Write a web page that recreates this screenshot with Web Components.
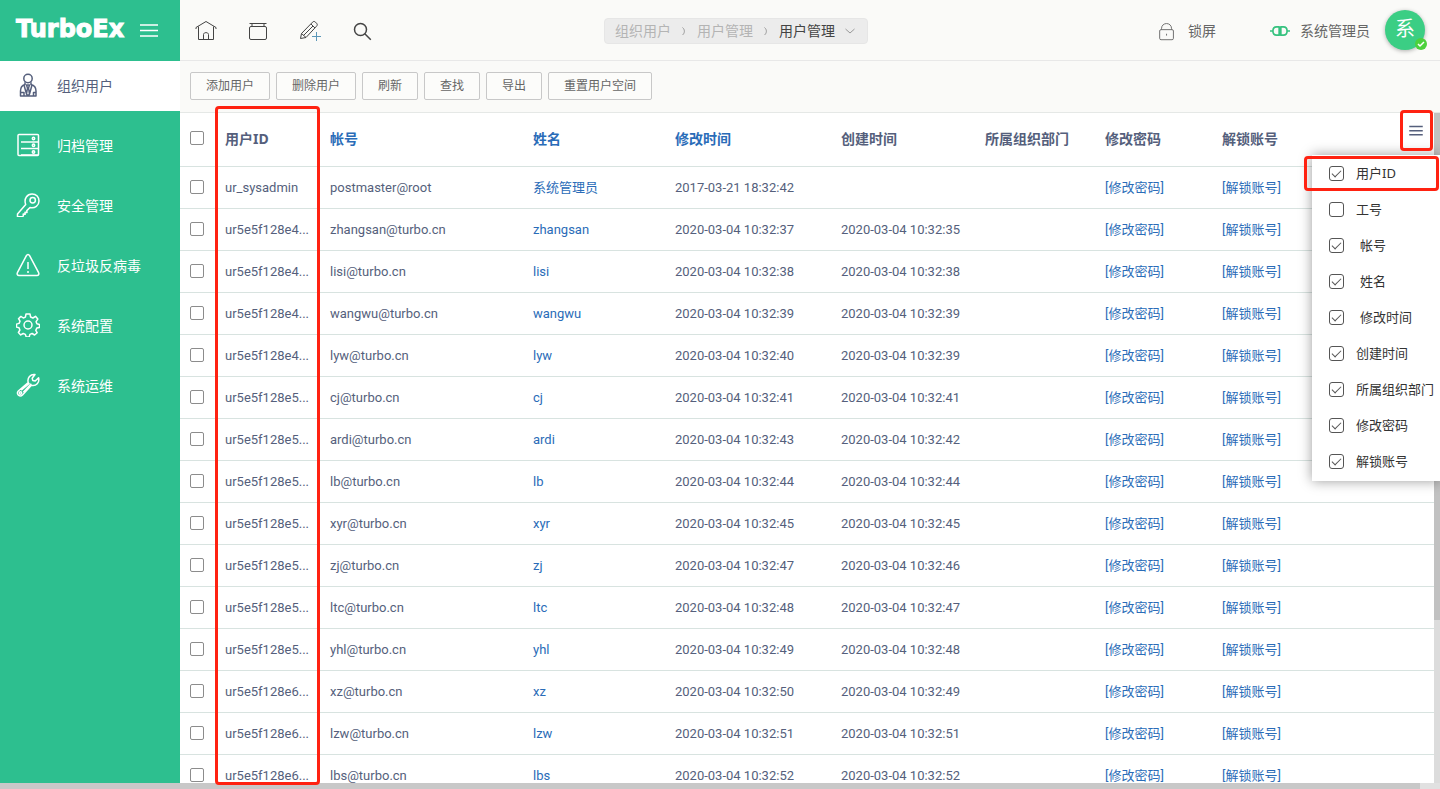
<!DOCTYPE html>
<html lang="zh-CN">
<head>
<meta charset="utf-8">
<meta name="viewport" content="width=device-width, initial-scale=1">
<title>TurboEx 用户管理</title>
<style>
body {
    margin: 0;
    font-family: "Noto Sans", "Noto Sans CJK SC", sans-serif;
    font-size: 13px;
    color: #555f7c;
}
</style>
</head>
<body>
<admin-app>
    <side-bar slot="side">
        <nav-item icon="user" active>组织用户</nav-item>
        <nav-item icon="archive">归档管理</nav-item>
        <nav-item icon="key">安全管理</nav-item>
        <nav-item icon="warn">反垃圾反病毒</nav-item>
        <nav-item icon="gear">系统配置</nav-item>
        <nav-item icon="wrench">系统运维</nav-item>
    </side-bar>
    <top-bar slot="top">
        <bread-crumb slot="crumb"></bread-crumb>
    </top-bar>
    <tool-bar slot="tools">
        <tool-button>添加用户</tool-button>
        <tool-button>删除用户</tool-button>
        <tool-button>刷新</tool-button>
        <tool-button>查找</tool-button>
        <tool-button>导出</tool-button>
        <tool-button>重置用户空间</tool-button>
    </tool-bar>
    <user-table slot="content"></user-table>
</admin-app>

<script>
const icons = {
    user: '<circle cx="12" cy="5.5" r="4.2"/><path d="M9 9.2v2.300C5.500 12.500 4.500 15 4.500 18v5h15.500v-5c0-3-1-5.500-5-6.500V9.200M4.500 19.500H8V23M17.500 23v-3.500H20M10.500 12h3l-1 3 1 6-1.500 2-1.500-2 1-6zM8 12l2.500 9M16 12l-2.500 9"/>',
    archive: '<rect x="2" y="1.500" width="20.500" height="21" rx="1"/><path d="M5 9h17M5 15.500h17M5 22h17"/><circle cx="17.500" cy="5.500" r="1.200"/><circle cx="17.500" cy="12.200" r="1.200"/><circle cx="17.500" cy="19" r="1.200"/>',
    key: '<path d="M9.700 11.500C7.500 5.500 11.500 1 16 1c4.500 0 7 3.300 7 7 0 4.500-4 7.500-9 6.500l-3.200 3.100.2 1.900-2-.2.2 2-2-.2.2 1.700-1.200 1H1.500v-2.800z"/><circle cx="16.700" cy="7.200" r="2.700"/>',
    warn: '<path d="M10.400 2.700c.7-1.500 2.500-1.500 3.200 0l9 17c.7 1.500 0 2.800-1.600 2.800H3c-1.600 0-2.300-1.300-1.600-2.800zM12 9v7M12 18v2"/>',
    gear: '<circle cx="12" cy="12" r="4"/><path d="M10 1h4l.6 3 2.300 1 2.600-1.700 2.300 2.800-1.700 2.600.8 2.100 2.600.7v2.900l-2.700.7-1 2.200 1.400 2.500-2.600 2.200-2.500-1.500-2.200.9-.7 2.500h-3l-.8-2.500-2.200-.9-2.500 1.400-2.300-2.400 1.500-2.500-.9-2.200-2.500-.7v-3l2.600-.7.9-2.200-1.500-2.500 2.400-2.300L7.300 5l2.100-.9z"/>',
    wrench: '<path d="M2.300 18L12.200 9.500C11 5 14.500.8 19 1.500l-2.800 3.800.6 2.300 2.400.4L22.600 4.700c1.200 5-2.400 8.600-7.200 7.600L6.500 22c-2.500 2.500-7-1-4.200-4zM5.200 17.300l8.300-7.200M7.300 19.300l8-8.500"/><circle cx="4.500" cy="20" r="1.200"/>',
    menu: '<path d="M3 6h18M3 11.500h18M3 17h18"/>',
    home: '<path d="M2 8.500l10-6 10 6M2 8.500v1.500M22 8.500v1.500M4.500 7.500v13h15v-13M9.500 20.500V15.500c0-2.500 5-2.500 5 0v5"/>',
    box: '<rect x="3.500" y="7.500" width="17" height="13" rx="1.500"/><path d="M3.500 4.500h17M6 5v2.500M18 5v2.500"/>',
    edit: '<path d="M2.500 19.500l1-5L14.500 3.200c1-1 2-1 3 0l1 1c1 1 1 2 0 3L8 18.500zM3.500 14.500L8 18.500M13 5l4 4M5.500 16.500L15 7"/>',
    plus: '<path d="M18.500 13v9M14 17.500h9"/>',
    search: '<circle cx="10.500" cy="10.500" r="6"/><path d="M14.800 14.800L20.800 20.800"/>',
    lock: '<rect x="4" y="10.500" width="15" height="11" rx="1.500"/><path d="M6 10.500V9.500c0-7.500 11-7.500 11 0v1M11.500 15v2"/>',
    link: '<path d="M11 7H8c-6 0-6 10 0 10h3zM13 7h3c6 0 6 10 0 10h-3zM0 12h3.500M20.500 12H24"/>',
    right: '<path d="M9 5c5 4 5 11 0 15"/>',
    down: '<path d="M3 8l9 8 9-8"/>',
    check: '<path d="M6 12l4 4 8-8"/>'
};

function icon(name, size, stroke = 1) {
    return `<svg width="${size}" height="${size}" viewBox="0 0 24 24" fill="none" stroke="currentColor" stroke-width="${stroke}" stroke-linejoin="round" aria-hidden="true">${icons[name]}</svg>`;
}

class BaseElement extends HTMLElement {
    constructor() {
        super();
        this.attachShadow({ mode: 'open' });
    }
    connectedCallback() {
        this.shadowRoot.innerHTML = this.render();
    }
}

class AdminApp extends BaseElement {
    render() {
        return `
        <style>
        :host {
            display: grid;
            grid-template-columns: 180px minmax(0, 1fr);
            grid-template-rows: minmax(0, 1fr) 6px;
            height: 100vh;
            overflow: hidden;
            background: #fff;
        }
        .main {display: flex; flex-direction: column; min-height: 0}
        .content {flex: 1; min-height: 0; display: flex}
        scroll-bar {grid-column: 1 / -1}
        </style>
        <slot name="side"></slot>
        <div class="main">
            <slot name="top"></slot>
            <slot name="tools"></slot>
            <div class="content"><slot name="content"></slot></div>
        </div>
        <scroll-bar style="--thumb: 1420fr; --rest: 20fr"></scroll-bar>
        `;
    }
}

class ScrollBar extends BaseElement {
    render() {
        return `
        <style>
        :host {display: grid; grid-template-columns: var(--thumb) var(--rest); background: #e1e1e1}
        :host([vertical]) {grid-template-columns: none; grid-template-rows: var(--thumb) var(--rest); width: 6px; background: #dcdcdc}
        div {background: #c8c8c8}
        :host([vertical]) div {background: #c1c1c1}
        </style>
        <div></div>
        `;
    }
}

class SideBar extends BaseElement {
    render() {
        return `
        <style>
        :host {display: block; background: #2dbf8f; color: #fff}
        header {display: flex; align-items: center; gap: 13px; height: 61px; padding: 0 0 3px 16px; box-sizing: border-box}
        b {font: bold 24px/32px "DejaVu Sans", sans-serif; -webkit-text-stroke: 1px #fff}
        button {display: flex; padding: 3px 0 0; border: 0; background: none; color: inherit}
        nav {display: flex; flex-direction: column; gap: 10px}
        </style>
        <header>
            <b>TurboEx</b>
            <button type="button" aria-label="菜单">${icon('menu', 24, 1.5)}</button>
        </header>
        <nav><slot></slot></nav>
        `;
    }
}

class NavItem extends BaseElement {
    render() {
        return `
        <style>
        :host {display: block}
        a {
            display: flex;
            align-items: center;
            gap: 17px;
            height: 50px;
            padding-left: 16px;
            color: #fff;
            font-size: 14px;
            line-height: 20px;
            text-decoration: none;
        }
        svg {margin-bottom: 2px}
        :host([active]) a {background: #fff; color: #555f7c}
        </style>
        <a href="#">${icon(this.getAttribute('icon'), 24, 1.5)}<span><slot></slot></span></a>
        `;
    }
}

class TopBar extends BaseElement {
    render() {
        return `
        <style>
        :host {
            display: flex;
            align-items: center;
            justify-content: space-between;
            height: 60px;
            flex: none;
            border-bottom: 1px solid #e8e8e8;
            background: #fafaf8;
            color: #666;
            font-size: 14px;
            line-height: 20px;
        }
        .left {display: flex; gap: 28px; padding: 2px 0 0 14px}
        .right {display: flex; align-items: center; padding-right: 15px}
        button {display: flex; align-items: center; padding: 0; border: 0; background: none; color: #444; font: inherit}
        .right button {gap: 10px; color: #666}
        .right button, .who {padding-top: 2px}
        .link {color: #35c27f}
        .lock {margin-right: 54px}
        .avatar {
            position: relative;
            width: 40px;
            height: 40px;
            margin-left: 15px;
            border-radius: 50%;
            background: #3bce84;
            box-shadow: 0 1px 4px rgba(0,0,0,0.3);
            color: #fff;
            font-size: 20px;
            line-height: 38px;
            text-align: center;
        }
        .badge {
            position: absolute;
            right: -2px;
            bottom: 0;
            display: flex;
            border-radius: 50%;
            background: #4cd13d;
        }
        .pen {position: relative}
        .pen svg + svg {position: absolute; left: 0; top: 0; color: #5b97b8}
        .who {display: flex; align-items: center; gap: 10px}
        .link svg {display: block}
        </style>
        <div class="left">
            <button type="button" aria-label="首页">${icon('home', 24)}</button>
            <button type="button" aria-label="窗口">${icon('box', 24)}</button>
            <button type="button" aria-label="新建" class="pen">${icon('edit', 24)}${icon('plus', 24)}</button>
            <button type="button" aria-label="搜索">${icon('search', 24, 1.5)}</button>
        </div>
        <slot name="crumb"></slot>
        <div class="right">
            <button type="button" class="lock">${icon('lock', 22)}<span>锁屏</span></button>
            <div class="who"><span class="link">${icon('link', 20, 2)}</span><span>系统管理员</span></div>
            <div class="avatar">系<span class="badge">${icon('check', 12, 3)}</span></div>
        </div>
        `;
    }
}

class BreadCrumb extends BaseElement {
    render() {
        return `
        <style>
        :host {
            display: flex;
            align-items: center;
            box-sizing: border-box;
            height: 26px;
            margin: 2px 58px 0 0;
            padding: 0 11px 0 10px;
            border: 1px solid #e6e6e6;
            border-radius: 4px;
            background: #ececec;
        }
        a {color: #b4b4b4; text-decoration: none}
        a.current {margin-right: 9px; color: #444}
        span {display: flex; justify-content: center; width: 26px; color: #999}
        svg {color: #999}
        </style>
        <a href="#">组织用户</a><span>${icon('right', 12, 2)}</span>
        <a href="#">用户管理</a><span>${icon('right', 12, 2)}</span>
        <a href="#" class="current">用户管理</a>${icon('down', 12, 2)}
        `;
    }
}

class ToolBar extends BaseElement {
    render() {
        return `
        <style>
        :host {
            display: flex;
            flex: none;
            gap: 6px;
            padding: 11px 10px 12px;
            border-bottom: 1px solid #e5e8e6;
            background: #fafaf8;
        }
        </style>
        <slot></slot>
        `;
    }
}

class ToolButton extends BaseElement {
    render() {
        return `
        <style>
        :host {display: block}
        button {
            display: block;
            height: 28px;
            padding: 0 15px;
            border: 1px solid #c8c8c8;
            border-radius: 2px;
            background: #fcfcfa;
            color: #666;
            font: inherit;
            font-size: 12px;
            line-height: 24px;
        }
        </style>
        <button type="button"><slot></slot></button>
        `;
    }
}

const users = [
    ['ur_sysadmin', 'postmaster@root', '系统管理员', '2017-03-21 18:32:42', ''],
    ['ur5e5f128e4...', 'zhangsan@turbo.cn', 'zhangsan', '2020-03-04 10:32:37', '2020-03-04 10:32:35'],
    ['ur5e5f128e4...', 'lisi@turbo.cn', 'lisi', '2020-03-04 10:32:38', '2020-03-04 10:32:38'],
    ['ur5e5f128e4...', 'wangwu@turbo.cn', 'wangwu', '2020-03-04 10:32:39', '2020-03-04 10:32:39'],
    ['ur5e5f128e4...', 'lyw@turbo.cn', 'lyw', '2020-03-04 10:32:40', '2020-03-04 10:32:39'],
    ['ur5e5f128e5...', 'cj@turbo.cn', 'cj', '2020-03-04 10:32:41', '2020-03-04 10:32:41'],
    ['ur5e5f128e5...', 'ardi@turbo.cn', 'ardi', '2020-03-04 10:32:43', '2020-03-04 10:32:42'],
    ['ur5e5f128e5...', 'lb@turbo.cn', 'lb', '2020-03-04 10:32:44', '2020-03-04 10:32:44'],
    ['ur5e5f128e5...', 'xyr@turbo.cn', 'xyr', '2020-03-04 10:32:45', '2020-03-04 10:32:45'],
    ['ur5e5f128e5...', 'zj@turbo.cn', 'zj', '2020-03-04 10:32:47', '2020-03-04 10:32:46'],
    ['ur5e5f128e5...', 'ltc@turbo.cn', 'ltc', '2020-03-04 10:32:48', '2020-03-04 10:32:47'],
    ['ur5e5f128e5...', 'yhl@turbo.cn', 'yhl', '2020-03-04 10:32:49', '2020-03-04 10:32:48'],
    ['ur5e5f128e6...', 'xz@turbo.cn', 'xz', '2020-03-04 10:32:50', '2020-03-04 10:32:49'],
    ['ur5e5f128e6...', 'lzw@turbo.cn', 'lzw', '2020-03-04 10:32:51', '2020-03-04 10:32:51'],
    ['ur5e5f128e6...', 'lbs@turbo.cn', 'lbs', '2020-03-04 10:32:52', '2020-03-04 10:32:52']
];

class UserTable extends BaseElement {
    render() {
        const rows = users.map(([id, account, name, modified, created]) => `
            <tr>
                <td><input type="checkbox" aria-label="${account}"></td>
                <td>${id}</td><td>${account}</td><td><a href="#">${name}</a></td>
                <td>${modified}</td><td>${created}</td><td></td>
                <td><a href="#">[修改密码]</a></td><td><a href="#">[解锁账号]</a></td>
            </tr>`).join('');
        return `
        <style>
        :host {position: relative; display: flex; flex: 1; min-width: 0}
        .scroll {flex: 1; min-width: 0; overflow: hidden}
        table {width: 100%; table-layout: fixed; border-collapse: separate; border-spacing: 0}
        th, td {
            height: 41px;
            padding: 0 0 0 10px;
            border-bottom: 1px solid #d8e3e0;
            line-height: 20px;
            text-align: left;
            white-space: nowrap;
        }
        th {height: 51px; padding-bottom: 2px; font-size: 14px}
        td {font-family: Roboto, "Noto Sans CJK SC", sans-serif}
        a {color: #2a6cb8; text-decoration: none}
        input {
            display: block;
            appearance: none;
            width: 14px;
            height: 14px;
            box-sizing: border-box;
            margin: 0 0 1px;
            border: 1px solid #8c8c8c;
            border-radius: 2px;
            background: #fff;
        }
        .open {
            position: absolute;
            right: 15px;
            top: 9px;
            display: flex;
            padding: 0;
            border: 0;
            background: none;
            color: #555f7c;
        }
        column-menu {position: absolute; right: 0; top: 42px}
        mark-frame {position: absolute}
        .id {left: 35px; top: -7px; bottom: -2px; width: 105px}
        .toggle {right: 7px; top: -3px; width: 33px; height: 41px}
        .first {right: 1px; top: 43px; width: 135px; height: 35px}
        </style>
        <div class="scroll">
            <table>
                <colgroup>
                    <col style="width:35px"><col style="width:105px"><col style="width:203px">
                    <col style="width:142px"><col style="width:166px"><col style="width:144px">
                    <col style="width:120px"><col style="width:117px"><col>
                </colgroup>
                <thead>
                    <tr>
                        <th><input type="checkbox" aria-label="全选"></th>
                        <th>用户ID</th><th><a href="#">帐号</a></th><th><a href="#">姓名</a></th>
                        <th><a href="#">修改时间</a></th><th>创建时间</th><th>所属组织部门</th>
                        <th>修改密码</th><th>解锁账号</th>
                    </tr>
                </thead>
                <tbody>${rows}</tbody>
            </table>
        </div>
        <scroll-bar vertical style="--thumb: 507fr; --rest: 163fr"></scroll-bar>
        <button type="button" class="open" aria-label="显示列">${icon('menu', 18, 2)}</button>
        <column-menu></column-menu>
        <mark-frame class="id"></mark-frame>
        <mark-frame class="toggle"></mark-frame>
        <mark-frame class="first"></mark-frame>
        `;
    }
}

class MarkFrame extends BaseElement {
    render() {
        return `
        <style>
        :host {display: block; box-sizing: border-box; border: 3px solid #ff2211; border-radius: 4px; pointer-events: none}
        </style>
        `;
    }
}

class ColumnMenu extends BaseElement {
    render() {
        // sortable columns carry a leading gap in their label
        const columns = [
            ['用户ID', true], ['工号', false], ['帐号', true, 'sort'], ['姓名', true, 'sort'], ['修改时间', true, 'sort'],
            ['创建时间', true], ['所属组织部门', true], ['修改密码', true], ['解锁账号', true]
        ];
        const items = columns.map(([text, on, sort = '']) => `
            <label class="${sort}"><input type="checkbox" ${on ? 'checked' : ''}><span>${text}</span></label>`).join('');
        return `
        <style>
        :host {
            display: block;
            box-sizing: border-box;
            width: 128px;
            padding-bottom: 2px;
            background: #fff;
            box-shadow: 0 0 12px rgba(0,0,0,0.4);
            color: #333;
        }
        label {display: flex; align-items: center; gap: 12px; height: 36px; padding-left: 17px; line-height: 20px; white-space: nowrap}
        .sort {gap: 16px}
        input {
            appearance: none;
            display: flex;
            align-items: center;
            justify-content: center;
            flex: none;
            box-sizing: border-box;
            width: 15px;
            height: 15px;
            margin: 0;
            border: 1px solid #555;
            border-radius: 3px;
        }
        input:checked::before {
            content: "";
            width: 9px;
            height: 5px;
            margin-bottom: 2px;
            box-sizing: border-box;
            border: solid #555;
            border-width: 0 0 1px 1px;
            transform: rotate(-45deg);
        }
        </style>
        ${items}
        `;
    }
}

customElements.define('scroll-bar', ScrollBar);
customElements.define('nav-item', NavItem);
customElements.define('side-bar', SideBar);
customElements.define('bread-crumb', BreadCrumb);
customElements.define('top-bar', TopBar);
customElements.define('tool-button', ToolButton);
customElements.define('tool-bar', ToolBar);
customElements.define('mark-frame', MarkFrame);
customElements.define('column-menu', ColumnMenu);
customElements.define('user-table', UserTable);
customElements.define('admin-app', AdminApp);
</script>
</body>
</html>
